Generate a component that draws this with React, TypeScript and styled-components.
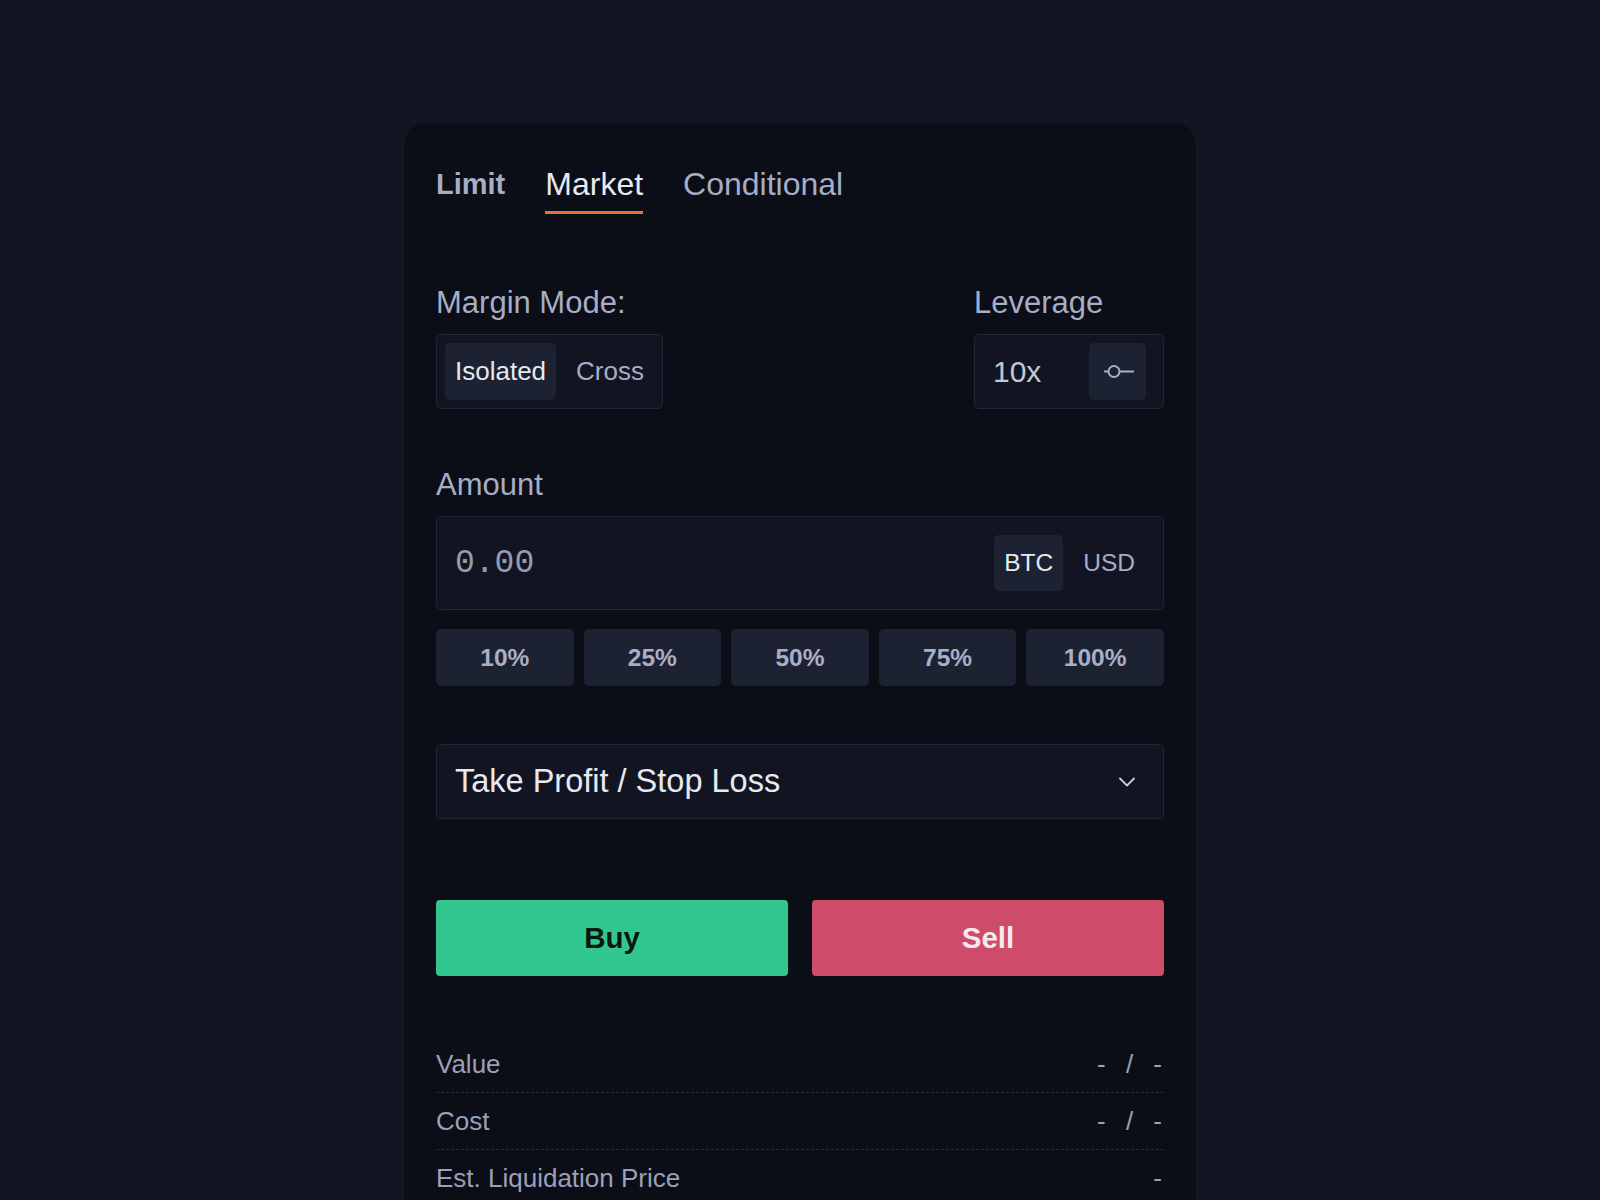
import React from "react";
import styled, { createGlobalStyle } from "styled-components";

const colors = {
    page: "#121521",
    card: "#0b0e17",
    field: "#121521",
    border: "#222636",
    pill: "#1d2232",
    label: "#a6adc5",
    muted: "#9aa1b8",
    white: "#e7e9f1",
    green: "#33c790",
    red: "#cf4b6a",
    accent: "#e8733a",
};

const GlobalStyle = createGlobalStyle`
    * { box-sizing: border-box; }
    body {
        margin: 0;
        background: ${colors.page};
        font-family: "Liberation Sans", Arial, sans-serif;
    }
`;

const Page = styled.div`
    min-height: 1200px;
    padding-top: 122px;
    display: flex;
    justify-content: center;
`;

const Card = styled.div`
    width: 794px;
    background: ${colors.card};
    border: 1px solid #141825;
    border-radius: 22px;
    padding: 43px 32px 40px;
`;

const Tabs = styled.div`
    display: flex;
    align-items: flex-end;
    gap: 40px;
`;

const Tab = styled.div<{ $active?: boolean; $bold?: boolean }>`
    font-size: ${(p) => (p.$bold ? "29px" : "32px")};
    font-weight: ${(p) => (p.$bold ? 700 : 400)};
    line-height: 37px;
    color: ${(p) => (p.$active ? colors.white : colors.label)};
    padding-bottom: 8px;
    border-bottom: 3px solid ${(p) => (p.$active ? colors.accent : "transparent")};
`;

const SettingsRow = styled.div`
    display: flex;
    justify-content: space-between;
    margin-top: 70px;
`;

const Group = styled.div`
    display: flex;
    flex-direction: column;
`;

const Label = styled.div`
    font-size: 31px;
    line-height: 37px;
    color: ${colors.label};
    margin-bottom: 13px;
`;

const Segmented = styled.div`
    display: flex;
    gap: 10px;
    padding: 8px;
    border: 1px solid ${colors.border};
    border-radius: 5px;
    background: ${colors.field};
`;

const Segment = styled.div<{ $active?: boolean }>`
    height: 57px;
    padding: 0 10px;
    display: flex;
    align-items: center;
    font-size: 26px;
    border-radius: 5px;
    color: ${(p) => (p.$active ? colors.white : colors.label)};
    background: ${(p) => (p.$active ? colors.pill : "transparent")};
`;

const LeverageBox = styled.div`
    width: 190px;
    display: flex;
    align-items: center;
    padding: 8px 17px 8px 18px;
    border: 1px solid ${colors.border};
    border-radius: 5px;
    background: ${colors.field};
`;

const LeverageValue = styled.div`
    flex: 1;
    font-size: 30px;
    color: #c3c8d7;
`;

const IconButton = styled.div`
    width: 57px;
    height: 57px;
    border-radius: 5px;
    background: ${colors.pill};
    display: flex;
    align-items: center;
    justify-content: center;
`;

const AmountSection = styled.div`
    margin-top: 57px;
`;

const AmountField = styled.div`
    display: flex;
    align-items: center;
    padding: 18px;
    border: 1px solid ${colors.border};
    border-radius: 5px;
    background: ${colors.field};
`;

const Placeholder = styled.div`
    flex: 1;
    font-family: "Liberation Mono", "DejaVu Sans Mono", monospace;
    font-size: 33px;
    color: #959cb2;
`;

const UnitToggle = styled.div`
    display: flex;
    gap: 10px;
`;

const Unit = styled.div<{ $active?: boolean }>`
    height: 56px;
    padding: 0 10px;
    display: flex;
    align-items: center;
    font-size: 24.5px;
    border-radius: 5px;
    color: ${(p) => (p.$active ? colors.white : colors.label)};
    background: ${(p) => (p.$active ? colors.pill : "transparent")};
`;

const PercentRow = styled.div`
    display: grid;
    grid-template-columns: repeat(5, 1fr);
    gap: 10px;
    margin-top: 19px;
`;

const PercentButton = styled.div`
    height: 57px;
    display: flex;
    align-items: center;
    justify-content: center;
    font-size: 24.5px;
    font-weight: 700;
    color: #a9afc6;
    background: ${colors.pill};
    border-radius: 5px;
`;

const Select = styled.div`
    margin-top: 58px;
    height: 75px;
    display: flex;
    align-items: center;
    justify-content: space-between;
    padding: 0 28px 0 18px;
    border: 1px solid ${colors.border};
    border-radius: 5px;
    background: ${colors.field};
    font-size: 32.5px;
    color: ${colors.white};
`;

const ActionRow = styled.div`
    display: grid;
    grid-template-columns: 1fr 1fr;
    gap: 24px;
    margin-top: 81px;
`;

const ActionButton = styled.div<{ $side: "buy" | "sell" }>`
    height: 76px;
    display: flex;
    align-items: center;
    justify-content: center;
    border-radius: 4px;
    font-size: 29.5px;
    font-weight: 700;
    background: ${(p) => (p.$side === "buy" ? colors.green : colors.red)};
    color: ${(p) => (p.$side === "buy" ? "#0b1812" : "#f4eaee")};
`;

const Summary = styled.div`
    margin-top: 60px;
`;

const SummaryRow = styled.div<{ $last?: boolean }>`
    display: flex;
    justify-content: space-between;
    padding: 13px 0;
    line-height: 30px;
    font-size: 26px;
    color: ${colors.muted};
    border-bottom: 1px dashed ${(p) => (p.$last ? "transparent" : "#272c3c")};
`;

const SummaryValue = styled.span`
    white-space: pre;
    word-spacing: 13px;
    padding-right: 2px;
`;

function SliderIcon() {
    return (
        <svg width="57" height="57" viewBox="0 0 57 57" fill="none">
            <line x1="15" y1="28.5" x2="19.5" y2="28.5" stroke="#a8afc6" strokeWidth="2" />
            <line x1="30.5" y1="28.5" x2="45" y2="28.5" stroke="#a8afc6" strokeWidth="2" />
            <circle cx="25" cy="28.5" r="5.5" stroke="#a8afc6" strokeWidth="2" />
        </svg>
    );
}

function Chevron() {
    return (
        <svg width="16" height="10" viewBox="0 0 16 10" fill="none">
            <polyline points="1,1.5 8,8.5 15,1.5" stroke="#c9cdd9" strokeWidth="1.8" strokeLinecap="round" strokeLinejoin="round" />
        </svg>
    );
}

const percents = ["10%", "25%", "50%", "75%", "100%"];

export default function App() {
    return (
        <>
            <GlobalStyle />
            <Page>
                <Card>
                    <Tabs>
                        <Tab $bold>Limit</Tab>
                        <Tab $active>Market</Tab>
                        <Tab>Conditional</Tab>
                    </Tabs>

                    <SettingsRow>
                        <Group>
                            <Label>Margin Mode:</Label>
                            <Segmented>
                                <Segment $active>Isolated</Segment>
                                <Segment>Cross</Segment>
                            </Segmented>
                        </Group>
                        <Group>
                            <Label>Leverage</Label>
                            <LeverageBox>
                                <LeverageValue>10x</LeverageValue>
                                <IconButton>
                                    <SliderIcon />
                                </IconButton>
                            </LeverageBox>
                        </Group>
                    </SettingsRow>

                    <AmountSection>
                        <Label>Amount</Label>
                        <AmountField>
                            <Placeholder>0.00</Placeholder>
                            <UnitToggle>
                                <Unit $active>BTC</Unit>
                                <Unit>USD</Unit>
                            </UnitToggle>
                        </AmountField>
                    </AmountSection>

                    <PercentRow>
                        {percents.map((p) => (
                            <PercentButton key={p}>{p}</PercentButton>
                        ))}
                    </PercentRow>

                    <Select>
                        <span>Take Profit / Stop Loss</span>
                        <Chevron />
                    </Select>

                    <ActionRow>
                        <ActionButton $side="buy">Buy</ActionButton>
                        <ActionButton $side="sell">Sell</ActionButton>
                    </ActionRow>

                    <Summary>
                        <SummaryRow>
                            <span>Value</span>
                            <SummaryValue>- / -</SummaryValue>
                        </SummaryRow>
                        <SummaryRow>
                            <span>Cost</span>
                            <SummaryValue>- / -</SummaryValue>
                        </SummaryRow>
                        <SummaryRow $last>
                            <span>Est. Liquidation Price</span>
                            <SummaryValue>-</SummaryValue>
                        </SummaryRow>
                    </Summary>
                </Card>
            </Page>
        </>
    );
}
